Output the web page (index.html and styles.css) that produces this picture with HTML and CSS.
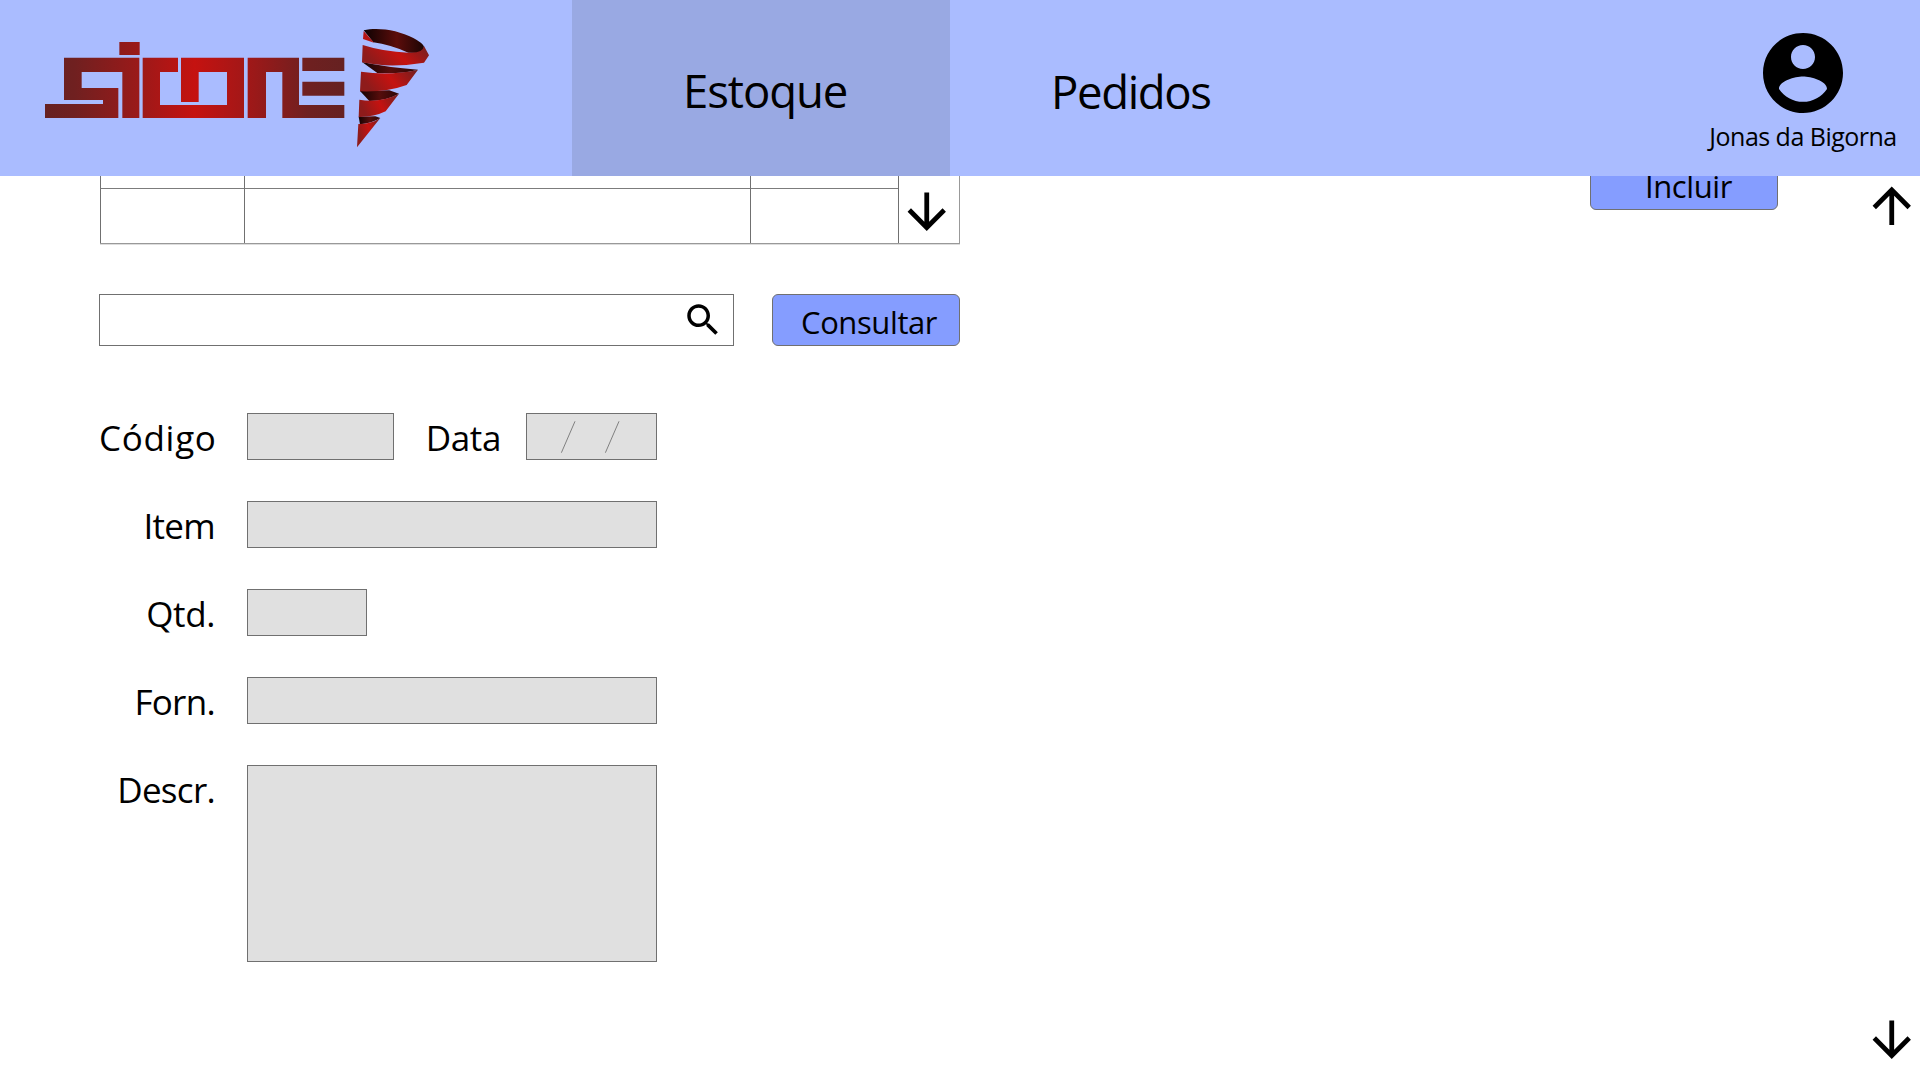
FILE: index.html
```html
<!DOCTYPE html>
<html lang="pt-BR">
<head>
<meta charset="utf-8">
<title>Sicone - Estoque</title>
<link rel="stylesheet" href="styles.css">
</head>
<body>
<header class="topbar">
  <a class="brand" href="#" aria-label="Sicone">
    <svg class="brand-logo" viewBox="0 0 1260 420">
      <defs>
        <linearGradient id="word" gradientUnits="userSpaceOnUse" x1="45" y1="0" x2="943" y2="0">
          <stop offset="0" stop-color="#662121"/><stop offset=".1" stop-color="#702020"/><stop offset=".32" stop-color="#9c1919"/><stop offset=".5" stop-color="#c51210"/><stop offset=".68" stop-color="#a01818"/><stop offset=".88" stop-color="#6e2020"/><stop offset="1" stop-color="#662121"/>
        </linearGradient>
        <linearGradient id="band" x1="0" y1=".3" x2="1" y2="0">
          <stop offset="0" stop-color="#8e1b1b"/><stop offset=".45" stop-color="#c51210"/><stop offset="1" stop-color="#6e2020"/>
        </linearGradient>
        <linearGradient id="inner" x1="0" y1="0" x2="1" y2="0">
          <stop offset="0" stop-color="#0c0202"/><stop offset=".55" stop-color="#5c0d0b"/><stop offset="1" stop-color="#1c0504"/>
        </linearGradient>
        <linearGradient id="fold" x1="0" y1="0" x2="1" y2="0">
          <stop offset="0" stop-color="#120303"/><stop offset=".5" stop-color="#560d0b"/><stop offset="1" stop-color="#2a0706"/>
        </linearGradient>
      </defs>
      <g fill="url(#word)">
        <path d="M102 113H328V294H277V156H155V204H265V294H45V252H219V240H102Z"/>
        <path d="M268 66H329V105H268Z"/>
        <path d="M338 113H444V156H390V255H591V156H506V246H453V113H642V294H338Z"/>
        <path d="M653 113H807V255H943V294H757V156H708V294H653Z"/>
        <path d="M817 113H943V153H817Z"/>
        <path d="M817 185H943V227H817Z"/>
      </g>
      <path fill="url(#inner)" d="M1001 31C1045 21 1105 31 1150 54Q1178 69 1182 80Q1182 98 1162 99L1135 98Q1080 74 1030 67Z"/>
      <path fill="#b51514" d="M1001 33L1032 68L999 57Z"/>
      <path fill="url(#fold)" d="M996 126Q1070 142 1164 149Q1120 162 1042 159Z"/>
      <path fill="url(#fold)" d="M990 213L1078 211L1107 221Q1070 242 1018 243Z"/>
      <path fill="url(#fold)" d="M986 290L1036 289L1051 294Q1025 310 990 313Z"/>
      <path fill="url(#band)" d="M998 75Q1060 95 1135 98Q1178 101 1182 78L1197 106L1182 128Q1080 145 996 127Z"/>
      <path fill="url(#band)" d="M993 155Q1080 168 1164 149L1130 195Q1070 217 990 214Z"/>
      <path fill="url(#band)" d="M988 239Q1050 250 1107 221L1067 274Q1030 292 986 291Z"/>
      <path fill="url(#band)" d="M985 312Q1025 312 1051 294L981 382Z"/>
    </svg>
  </a>
  <nav class="tabs">
    <a class="tab tab-active" href="#">Estoque</a>
    <a class="tab tab-orders" href="#">Pedidos</a>
  </nav>
  <div class="user">
    <svg class="user-icon" viewBox="0 0 24 24"><path d="M12 2C6.48 2 2 6.48 2 12s4.48 10 10 10 10-4.48 10-10S17.52 2 12 2zm0 3c1.66 0 3 1.34 3 3s-1.34 3-3 3-3-1.34-3-3 1.34-3 3-3zm0 14.2c-2.5 0-4.71-1.28-6-3.22.03-1.99 4-3.08 6-3.08 1.99 0 5.97 1.09 6 3.08-1.29 1.94-3.5 3.22-6 3.22z"/></svg>
    <span class="user-name">Jonas da Bigorna</span>
  </div>
</header>

<main class="page">
  <div class="content">
    <div class="top-row">
      <div class="stock">
        <div class="stock-rows">
          <div class="cell"></div><div class="cell"></div><div class="cell"></div>
          <div class="cell cell-last"></div><div class="cell cell-last"></div><div class="cell cell-last"></div>
        </div>
        <div class="stock-scroll">
          <svg class="arrow" viewBox="0 0 24 24"><path d="M20 12l-1.41-1.41L13 16.17V4h-2v12.17l-5.58-5.59L4 12l8 8 8-8z"/></svg>
        </div>
      </div>
      <button class="btn btn-include">Incluir</button>
    </div>

    <div class="search-row">
      <div class="search">
        <svg class="search-icon" viewBox="0 0 24 24"><path d="M15.5 14h-.79l-.28-.27C15.41 12.59 16 11.11 16 9.5 16 5.91 13.09 3 9.5 3S3 5.91 3 9.5 5.91 16 9.5 16c1.61 0 3.09-.59 4.23-1.57l.27.28v.79l5 4.99L20.49 19l-4.99-5zm-6 0C7.01 14 5 11.99 5 9.5S7.01 5 9.5 5 14 7.01 14 9.5 11.99 14 9.5 14z"/></svg>
      </div>
      <button class="btn btn-search">Consultar</button>
    </div>

    <form class="form">
      <div class="row">
        <label class="label label-code">Código</label>
        <div class="field field-code"></div>
        <label class="label label-date">Data</label>
        <div class="field field-date">
          <svg class="slashes" viewBox="0 0 129 45"><path d="M34.4 38.7L48 7.3M78.4 38.7L92 7.3"/></svg>
        </div>
      </div>
      <div class="row">
        <label class="label">Item</label>
        <div class="field field-wide"></div>
      </div>
      <div class="row">
        <label class="label label-qty">Qtd.</label>
        <div class="field field-qty"></div>
      </div>
      <div class="row">
        <label class="label">Forn.</label>
        <div class="field field-wide"></div>
      </div>
      <div class="row">
        <label class="label">Descr.</label>
        <div class="field field-wide field-area"></div>
      </div>
    </form>
  </div>

  <aside class="rail">
    <svg class="arrow" viewBox="0 0 24 24"><path d="M4 12l1.41 1.41L11 7.83V20h2V7.83l5.58 5.59L20 12l-8-8-8 8z"/></svg>
    <svg class="arrow" viewBox="0 0 24 24"><path d="M20 12l-1.41-1.41L13 16.17V4h-2v12.17l-5.58-5.59L4 12l8 8 8-8z"/></svg>
  </aside>
</main>
</body>
</html>
```
FILE: styles.css
```css
* {
  box-sizing: border-box;
}

body {
  margin: 0;
  height: 1080px;
  overflow: hidden;
  background: #fff;
  color: #000;
  font-family: "Open Sans", "Noto Sans", sans-serif;
}

a {
  color: inherit;
  text-decoration: none;
}

svg {
  display: block;
  flex: none;
}

/* Top bar */
.topbar {
  position: relative;
  z-index: 1;
  display: flex;
  height: 176px;
  background: #aabcff;
}

.brand {
  width: 572px;
  padding: 20px 0 0 30px;
}

.brand-logo {
  width: 420px;
  height: 140px;
}

.tabs {
  display: flex;
  flex: 1;
}

.tab {
  display: flex;
  align-items: center;
  width: 378px;
  padding-top: 3px;
  padding-left: 111px;
  font-size: 45.5px;
  letter-spacing: -1.1px;
}

.tab-active {
  background: #99a9e3;
}

.tab-orders {
  padding-top: 5px;
  padding-left: 101px;
  letter-spacing: -1.35px;
}

.user {
  display: flex;
  flex-direction: column;
  align-items: center;
  width: 234px;
  padding-top: 25px;
}

.user-icon {
  width: 96px;
  height: 96px;
}

.user-name {
  margin-top: 2px;
  font-size: 25px;
  line-height: 27px;
  letter-spacing: -0.52px;
  white-space: nowrap;
}

/* Page */
.page {
  display: flex;
  height: 904px;
}

.content {
  flex: 1;
  padding-left: 99px;
}

.top-row {
  display: flex;
  align-items: flex-start;
  height: 118px;
  padding-left: 1px;
}

.stock {
  display: flex;
  width: 860px;
  height: 68px;
  border-right: 1px solid #999;
  border-bottom: 1px solid #999;
  box-shadow: 0 1px #ddd;
}

.stock-rows {
  display: grid;
  grid-template-columns: 144px 506px 148px;
  grid-template-rows: 12px 55px;
}

.cell {
  border-left: 1px solid #707070;
}

.cell-last {
  border-top: 1px solid #7c7c7c;
}

.stock-scroll {
  flex: 1;
  padding-top: 7px;
  border-left: 1px solid #707070;
}

.arrow {
  width: 57.5px;
  height: 57.5px;
}

.stock-scroll .arrow {
  margin-left: -0.6px;
}

.btn {
  width: 188px;
  height: 52px;
  padding: 3px 0 0 28px;
  border: 1px solid #707070;
  border-radius: 6px;
  background: #859dff;
  color: #000;
  font: 31px "Open Sans", "Noto Sans", sans-serif;
  letter-spacing: -0.4px;
  line-height: 42px;
  text-align: left;
}

.btn-include {
  margin: -18px 0 0 630px;
  padding-top: 4px;
  padding-left: 54px;
}

.search-row {
  display: flex;
  gap: 38px;
}

.search {
  display: flex;
  align-items: center;
  justify-content: flex-end;
  width: 635px;
  height: 52px;
  padding-right: 9px;
  border: 1px solid #707070;
}

.search-icon {
  width: 42px;
  height: 42px;
}

/* Form */
.form {
  display: flex;
  flex-direction: column;
  gap: 41px;
  margin-top: 67px;
}

.row {
  display: flex;
  align-items: flex-start;
}

.label {
  width: 116px;
  height: 47px;
  margin-right: 32px;
  padding-top: 1px;
  font-size: 35px;
  line-height: 47px;
  letter-spacing: -0.7px;
  text-align: right;
  white-space: nowrap;
}

.label-code {
  letter-spacing: 0.7px;
}

.label-date {
  width: 107px;
  margin-right: 25px;
  letter-spacing: -0.4px;
}

.label-qty {
  letter-spacing: -0.4px;
}

.field {
  height: 47px;
  border: 1px solid #707070;
  background: #e0e0e0;
}

.field-code {
  width: 147px;
}

.field-date {
  width: 131px;
}

.field-qty {
  width: 120px;
}

.field-wide {
  width: 410px;
}

.field-area {
  height: 197px;
}

.slashes {
  width: 129px;
  height: 45px;
  fill: none;
  stroke: #808080;
  stroke-width: 1;
}

/* Scroll rail */
.rail {
  display: flex;
  flex-direction: column;
  justify-content: space-between;
  width: 57.5px;
  padding: 0.5px 0 11.5px;
}
```
